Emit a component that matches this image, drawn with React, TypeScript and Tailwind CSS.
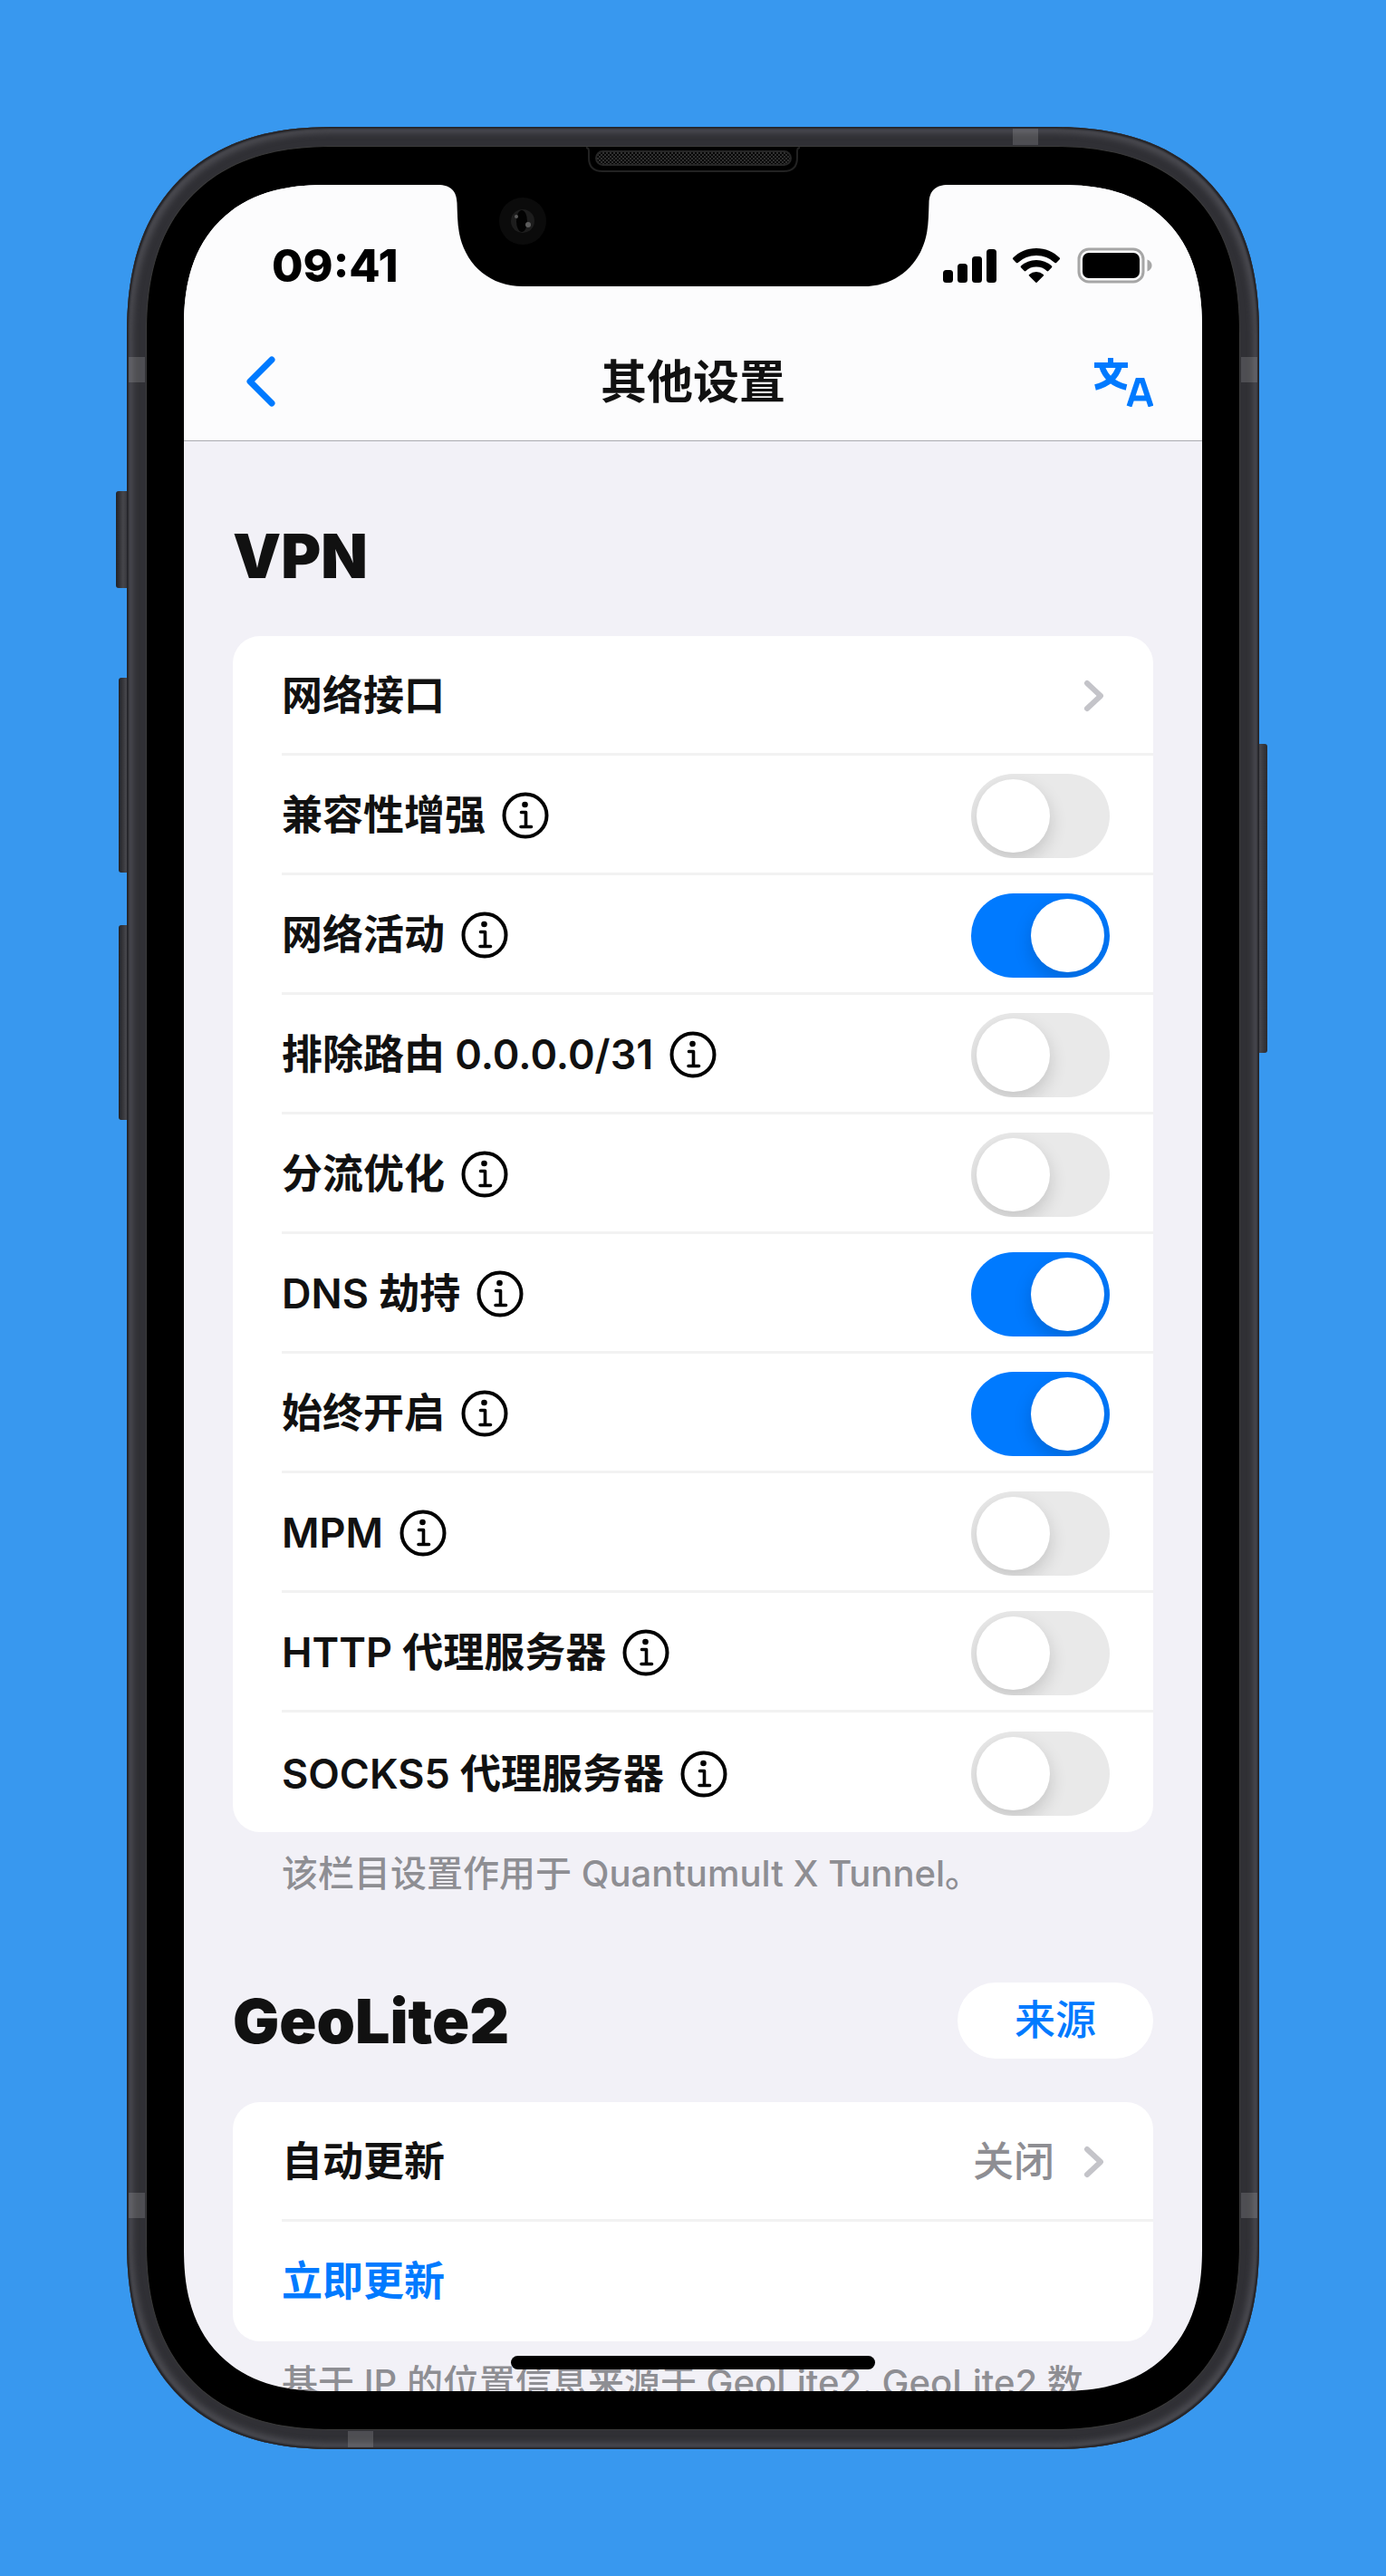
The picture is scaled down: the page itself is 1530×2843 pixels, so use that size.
import React from 'react';

const FONT =
  'font-[Inter,"Noto_Sans_CJK_SC",sans-serif]';

function InfoIcon() {
  return (
    <svg viewBox="0 0 52 52" className="size-[52px]" fill="none" stroke="#000" aria-hidden="true">
      <circle cx="26" cy="26" r="23.5" strokeWidth="4" />
      <circle cx="25.500" cy="14" r="3.3" fill="#000" stroke="none" />
      <path d="M21.500 22.500h5V38M21 38.500h11.500" strokeWidth="3.6" strokeLinecap="round" strokeLinejoin="round" />
    </svg>
  );
}

function ChevronRight() {
  return (
    <svg viewBox="0 0 22 36" className="h-9 w-[22px]" fill="none" stroke="#c4c4c9" strokeWidth="6" strokeLinecap="round" strokeLinejoin="round" aria-hidden="true">
      <path d="M4 4l15 14L4 32" />
    </svg>
  );
}

type ToggleProps = { id: string; defaultOn: boolean };

function Toggle({ id, defaultOn }: ToggleProps) {
  return (
    <input
      id={id}
      type="checkbox"
      role="switch"
      defaultChecked={defaultOn}
      className="h-[93px] w-[153px] shrink-0 cursor-pointer appearance-none overflow-hidden rounded-full bg-[#e9e9e9] p-1.5 before:block before:size-[81px] before:rounded-full before:bg-white before:shadow-[0_8px_20px_rgba(0,0,0,0.16)] before:content-[''] checked:bg-[#007aff] checked:before:ml-[60px]"
    />
  );
}

const switches = [
  { id: 'compat', label: '兼容性增强', on: false },
  { id: 'activity', label: '网络活动', on: true },
  { id: 'exclude', label: '排除路由 0.0.0.0/31', on: false },
  { id: 'split', label: '分流优化', on: false },
  { id: 'dns', label: 'DNS 劫持', on: true },
  { id: 'always', label: '始终开启', on: true },
  { id: 'mpm', label: 'MPM', on: false },
  { id: 'http', label: 'HTTP 代理服务器', on: false },
  { id: 'socks', label: 'SOCKS5 代理服务器', on: false },
];

function SwitchRow({ id, label, on }: { id: string; label: string; on: boolean }) {
  return (
    <li className="flex h-[132px] items-center border-b-[3px] border-[#f2f2f2] pr-12 pt-[3px] last:border-b-0">
      <label htmlFor={id}>{label}</label>
      <button type="button" aria-label={`${label} 说明`} className="ml-[18px]">
        <InfoIcon />
      </button>
      <div className="ml-auto flex">
        <Toggle id={id} defaultOn={on} />
      </div>
    </li>
  );
}

function StatusBar() {
  return (
    <div className="flex h-[178px] items-center justify-between pl-[97px] pr-[54px]">
      <time className="text-[50px] font-extrabold leading-none text-black">09:41</time>
      <div className="flex items-center text-black">
        <svg viewBox="0 0 60 38" className="h-[38px] w-[60px]" fill="currentColor" aria-label="信号">
          <rect x="0" y="24" width="11" height="14" rx="3.500" />
          <rect x="16" y="17" width="11" height="21" rx="3.500" />
          <rect x="32" y="9" width="11" height="29" rx="3.500" />
          <rect x="48" y="1" width="11" height="37" rx="3.500" />
        </svg>
        <svg viewBox="0 0 54 38" className="ml-4 h-[38px] w-[54px]" fill="currentColor" aria-label="无线网络">
          <path d="M27 0C17 0 8 4 1.300 10.500a1.200 1.200 0 0 0 0 1.700l3.600 3.700a1.200 1.200 0 0 0 1.700 0A30 30 0 0 1 27 8a30 30 0 0 1 20.400 7.900 1.200 1.200 0 0 0 1.700 0l3.600-3.700a1.200 1.200 0 0 0 0-1.700C46 4 37 0 27 0z" />
          <path d="M27 13a25 25 0 0 0-17 6.600 1.200 1.200 0 0 0 0 1.700l3.700 3.700a1.200 1.200 0 0 0 1.700 0A17 17 0 0 1 27 20.600a17 17 0 0 1 11.600 4.400 1.200 1.200 0 0 0 1.700 0l3.700-3.700a1.200 1.200 0 0 0 0-1.700A25 25 0 0 0 27 13z" />
          <path d="M27 26a12 12 0 0 0-7.900 2.900 1.200 1.200 0 0 0 0 1.700l7 7a1.200 1.200 0 0 0 1.700 0l7-7a1.200 1.200 0 0 0 0-1.700A12 12 0 0 0 27 26z" />
        </svg>
        <svg viewBox="0 0 84 40" className="ml-[18px] h-10 w-[84px]" aria-label="电池">
          <rect x="2" y="2" width="71" height="36" rx="11" fill="none" stroke="#a6a6a6" strokeWidth="3" />
          <rect x="6" y="6" width="63" height="28" rx="7" fill="#000" />
          <path d="M77.500 13.500c3 1 5 3.500 5 6.500s-2 5.500-5 6.500z" fill="#a6a6a6" />
        </svg>
      </div>
    </div>
  );
}

function NavBar() {
  return (
    <div className="grid grid-cols-[1fr_auto_1fr] items-center px-[54px] pb-6 text-[#007aff]">
      <button type="button" aria-label="返回" className="ml-3.5 justify-self-start">
        <svg viewBox="0 0 34 58" className="h-[58px] w-[34px]" fill="none" stroke="currentColor" strokeWidth="7" strokeLinecap="round" strokeLinejoin="round" aria-hidden="true">
          <path d="M29 4L5 28l24 24" />
        </svg>
      </button>
      <h1 className="text-[51px] font-semibold leading-[80px] text-[#111]">其他设置</h1>
      <button type="button" aria-label="翻译" className="justify-self-end">
        <svg viewBox="0 0 66 54" className="h-[54px] w-[66px]" fill="none" stroke="currentColor" aria-hidden="true">
          <path d="M19 0v8M1 8h37" strokeWidth="6" />
          <path d="M9.500 9.500C13 21 22 29 36.500 32.500M28.500 9.500C25 21 16 29 2 32.500" strokeWidth="6.500" />
          <path d="M39.500 53.500L49 25h5L63.500 53.500M43 44.500h17" strokeWidth="6" />
        </svg>
      </button>
    </div>
  );
}

function Notch() {
  return (
    <div className="pointer-events-none absolute inset-x-0 top-0 flex justify-center">
      <svg viewBox="0 0 564 113" className="h-[113px] w-[564px]" aria-hidden="true">
        <path d="M0 0H564C549 0 543 7 542.500 20C542 34 542 46 539 58C531 90 505 112 470 112H94C59 112 33 90 25 58C22 46 22 34 21.500 20C21 7 15 0 0 0Z" fill="#000" />
        <circle cx="94" cy="40" r="26" fill="#0b0b0b" />
        <circle cx="94" cy="40" r="13" fill="#1d1d1d" />
        <ellipse cx="93" cy="40" rx="6" ry="12" fill="#020202" />
        <circle cx="100" cy="44" r="3" fill="#5c5c5c" />
        <circle cx="87" cy="35" r="2" fill="#5c5c5c" />
      </svg>
    </div>
  );
}

function Speaker() {
  return (
    <div className="pointer-events-none absolute inset-x-0 top-0 flex justify-center">
      <svg viewBox="0 0 236 30" className="h-[30px] w-[236px]" aria-hidden="true">
        <defs>
          <pattern id="mesh" width="4" height="4" patternUnits="userSpaceOnUse">
            <rect width="4" height="4" fill="#060606" />
            <rect width="2" height="2" fill="#303030" />
            <rect x="2" y="2" width="2" height="2" fill="#303030" />
          </pattern>
        </defs>
        <path d="M0 1Q3 1 3 5V12Q3 27 18 27H218Q233 27 233 12V5Q233 1 236 1" fill="none" stroke="#222" strokeWidth="2" />
        <rect x="11" y="5" width="215" height="15" rx="7.500" fill="url(#mesh)" stroke="#262626" strokeWidth="2" />
      </svg>
    </div>
  );
}

const keyBase = 'absolute rounded-[3px] bg-linear-to-r from-[#222226] via-[#46464b] to-[#2a2a2e]';

export default function App() {
  return (
    <main className={`${FONT} flex h-screen bg-[#3898ef] p-[140px]`}>
      <div className="relative min-w-0 flex-1">
        <span className={`${keyBase} -left-3 top-[402px] h-[107px] w-4`} />
        <span className={`${keyBase} -left-[9px] top-[608px] h-[215px] w-4`} />
        <span className={`${keyBase} -left-[9px] top-[881px] h-[215px] w-4`} />
        <span className={`${keyBase} -right-[9px] top-[681px] h-[341px] w-4`} />

        <div className="relative h-full rounded-[200px] bg-[#303035] p-[21px] shadow-[inset_0_0_2px_2px_#232327,inset_0_0_6px_7px_#4a4a50] [corner-shape:superellipse(1.25)] supports-[corner-shape:squircle]:rounded-[230px]">
          <span className="absolute left-[978px] top-0.5 h-[18px] w-7 bg-white/15" />
          <span className="absolute bottom-0.5 left-[244px] h-[18px] w-7 bg-white/15" />
          <span className="absolute left-0.5 top-[254px] h-7 w-[18px] bg-white/15" />
          <span className="absolute right-0.5 top-[254px] h-7 w-[18px] bg-white/15" />
          <span className="absolute bottom-[255px] left-0.5 h-7 w-[18px] bg-white/15" />
          <span className="absolute bottom-[255px] right-0.5 h-7 w-[18px] bg-white/15" />

          <div className="relative h-full rounded-[179px] border border-[#3a3a3a] bg-black px-[41px] py-[42px] [corner-shape:superellipse(1.25)] supports-[corner-shape:squircle]:rounded-[207px]">
            <Speaker />

            <div className="relative flex h-full flex-col overflow-hidden rounded-[137px] bg-[#f2f1f7] text-[#111] [corner-shape:superellipse(1.25)] supports-[corner-shape:squircle]:rounded-[157px]">
              <header className="shrink-0 border-b border-[#aaaaaf] bg-[#fcfcfd]">
                <StatusBar />
                <NavBar />
              </header>

              <div className="min-h-0 flex-1 overflow-y-auto px-[54px] pt-[87px] [scrollbar-width:none]">
                <section>
                  <h2 className="text-[67px] font-black leading-[80px]">VPN</h2>
                  <ul className="mt-12 rounded-[30px] bg-white pl-[54px] text-[45px] font-semibold leading-[60px]">
                    <li className="flex h-[132px] items-center border-b-[3px] border-[#f2f2f2] pt-[3px]">
                      <button type="button" className="flex flex-1 items-center justify-between pr-[55px] text-left">
                        网络接口
                        <ChevronRight />
                      </button>
                    </li>
                    {switches.map((s) => (
                      <SwitchRow key={s.id} id={s.id} label={s.label} on={s.on} />
                    ))}
                  </ul>
                  <p className="mt-4 pl-[54px] text-[40px] font-medium leading-[60px] text-[#8e8e93]">
                    该栏目设置作用于 Quantumult X Tunnel。
                  </p>
                </section>

                <section className="mt-[90px]">
                  <div className="flex items-center justify-between">
                    <h2 className="text-[68px] font-black leading-[80px]">GeoLite2</h2>
                    <button type="button" className="h-[84px] rounded-full bg-white px-[63px] text-[45px] font-medium leading-[60px] text-[#007aff]">
                      来源
                    </button>
                  </div>
                  <ul className="mt-12 rounded-[30px] bg-white pl-[54px] text-[45px] font-semibold leading-[60px]">
                    <li className="flex h-[132px] items-center border-b-[3px] border-[#f2f2f2] pt-[3px]">
                      <button type="button" className="flex flex-1 items-center pr-[55px] text-left">
                        <span>自动更新</span>
                        <span className="ml-auto mr-8 font-medium text-[#8e8e93]">关闭</span>
                        <ChevronRight />
                      </button>
                    </li>
                    <li className="flex h-[132px] items-center text-[#007aff]">
                      <button type="button">立即更新</button>
                    </li>
                  </ul>
                  <p className="mt-4 whitespace-nowrap pl-[54px] text-[40px] font-medium leading-[60px] text-[#8e8e93]">
                    基于 IP 的位置信息来源于 GeoLite2. GeoLite2 数
                  </p>
                </section>
              </div>

              <Notch />
              <div className="pointer-events-none absolute inset-x-0 bottom-6 flex justify-center">
                <span className="h-[15px] w-[402px] rounded-full bg-black" />
              </div>
            </div>
          </div>
        </div>
      </div>
    </main>
  );
}
